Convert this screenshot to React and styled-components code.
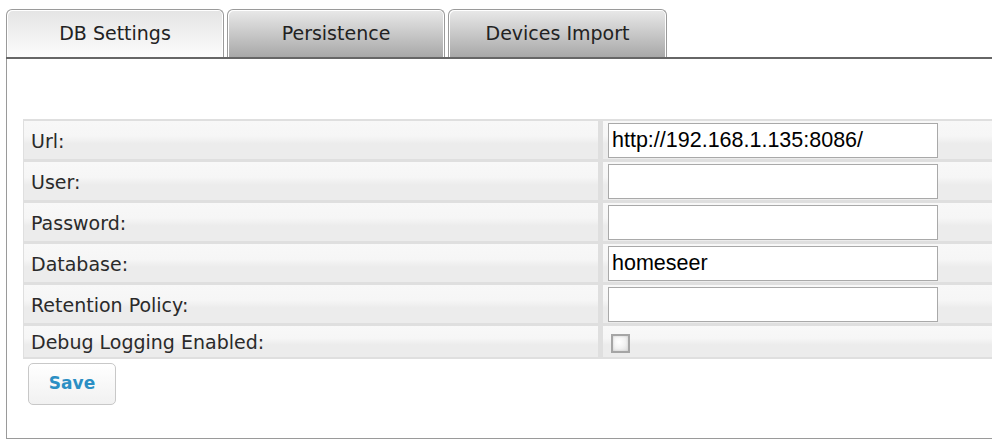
import { useState, Fragment } from 'react'
import styled, { createGlobalStyle } from 'styled-components'

const GlobalStyle = createGlobalStyle`
    html, body {
        margin: 0;
        padding: 0;
        background: #fff;
        overflow: hidden;
    }
    body {
        font-family: "DejaVu Sans", Verdana, sans-serif;
    }
`

const Page = styled.div`
    width: 1100px;
    padding: 9px 0 0 6px;
`

const TabBar = styled.div`
    display: flex;
    gap: 3px;
    height: 48px;
    border-bottom: 2px solid #666;
`

const Tab = styled.button`
    width: ${p => p.$width || 218}px;
    height: 48px;
    box-sizing: border-box;
    border: 1px solid #9a9a9a;
    border-bottom: none;
    border-radius: 6px 6px 0 0;
    font-family: "DejaVu Sans", Verdana, sans-serif;
    font-size: 19px;
    color: #222;
    padding: 0 0 1px;
    cursor: pointer;
    background: ${p => p.$active
        ? 'linear-gradient(#e4e4e4, #fcfcfc)'
        : 'linear-gradient(#e9e9e9, #a8a8a8)'};
    box-shadow: inset 1px 1px 0 #fff, inset -1px 0 0 #fff;
`

const Panel = styled.div`
    border-left: 1px solid #9a9a9a;
    border-bottom: 1px solid #9a9a9a;
    padding: 60px 0 33px 16px;
`

const Table = styled.div`
    display: grid;
    grid-template-columns: 574px 1fr;
    gap: 3px 5px;
    padding: 2px 0 2px 1px;
    background: #dfdfdf;
`

const Cell = styled.div`
    height: ${p => p.$short ? 31 : 38}px;
    box-sizing: border-box;
    background: linear-gradient(#f8f8f8 0%, #f6f6f6 40%, #ececec 60%, #ececec 100%);
    display: flex;
    align-items: ${p => p.$field ? 'flex-end' : 'center'};
    padding-bottom: ${p => p.$field ? '1px' : '0'};
`

const Label = styled(Cell)`
    padding: 1px 0 0 7px;
    font-size: 19px;
    color: #2a2a2a;
`

const Input = styled.input`
    width: 330px;
    height: 35px;
    box-sizing: border-box;
    margin-left: 5px;
    border: 1px solid #a9a9a9;
    background: #fff;
    padding: 0 3px;
    font-family: "Liberation Sans", Arial, sans-serif;
    font-size: 21.5px;
    color: #000;
    outline: none;
`

const Check = styled.span`
    width: 19px;
    height: 19px;
    box-sizing: border-box;
    margin: 4px 0 0 8px;
    border: 2px solid #a5a5a5;
    background: radial-gradient(circle at 40% 40%, #fff 0%, #f2f2f2 50%, #dcdcdc 100%);
    box-shadow: inset 0 0 2px #c8c8c8;
`

const SaveButton = styled.button`
    margin: 4px 0 0 5px;
    width: 88px;
    height: 42px;
    border: 1px solid #c8c8c8;
    border-radius: 5px;
    background: linear-gradient(#ffffff, #f1f1f1);
    font-family: "DejaVu Sans", Verdana, sans-serif;
    font-weight: bold;
    font-size: 17px;
    color: #2b8fc4;
    padding: 0 0 2px;
    cursor: pointer;
`

const tabs = ['DB Settings', 'Persistence', 'Devices Import']

const fields = [
    { label: 'Url:', value: 'http://192.168.1.135:8086/' },
    { label: 'User:', value: '' },
    { label: 'Password:', value: '' },
    { label: 'Database:', value: 'homeseer' },
    { label: 'Retention Policy:', value: '' },
]

const App = () => {

    const [active, setActive] = useState(0)

    return (
        <Page>
            <GlobalStyle />
            <TabBar>
                {tabs.map((t, i) => (
                    <Tab key={t} $active={i === active} $width={i === 2 ? 219 : 218} onClick={() => setActive(i)}>
                        {t}
                    </Tab>
                ))}
            </TabBar>
            <Panel>
                <Table>
                    {fields.map(f => (
                        <Fragment key={f.label}>
                            <Label>{f.label}</Label>
                            <Cell $field>
                                <Input defaultValue={f.value} type={f.label === 'Password:' ? 'password' : 'text'} />
                            </Cell>
                        </Fragment>
                    ))}
                    <Label $short>Debug Logging Enabled:</Label>
                    <Cell $short>
                        <Check />
                    </Cell>
                </Table>
                <SaveButton>Save</SaveButton>
            </Panel>
        </Page>
    )
}

export default App
